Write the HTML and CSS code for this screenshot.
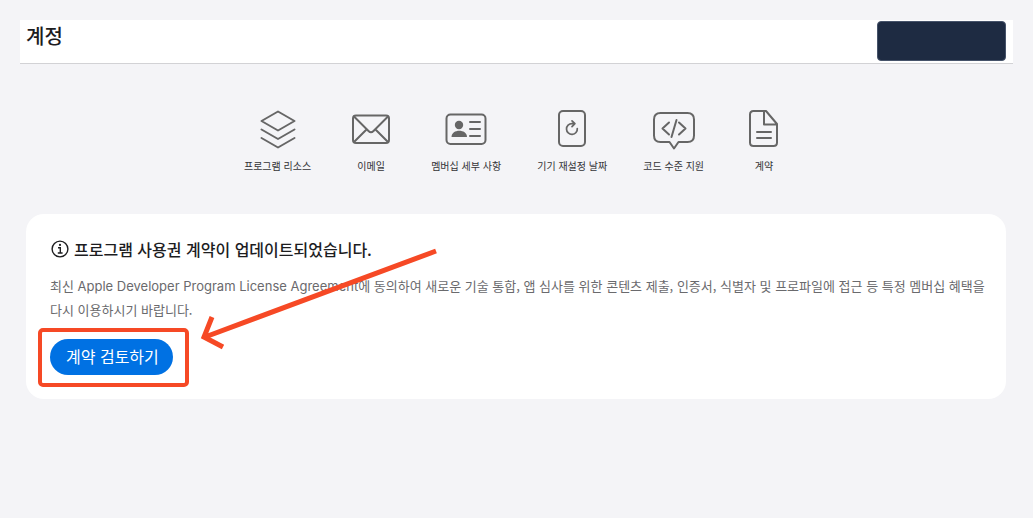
FILE: index.html
```html
<!DOCTYPE html>
<html lang="ko">
<head>
<meta charset="utf-8">
<meta name="viewport" content="width=device-width, initial-scale=1">
<title>계정</title>
<link rel="stylesheet" href="styles.css">
</head>
<body>
<header class="topbar">
  <h1 class="topbar-title">계정</h1>
  <div class="topbar-account"></div>
</header>
<main class="content">
  <nav class="shortcuts">
    <a class="shortcut" href="#resources">
      <svg class="shortcut-icon" viewBox="0 0 48 44"><path d="M24 5.500 40.500 15 24 24.500 7.500 15ZM7.500 23.500 24 33 40.500 23.500M7.500 32 24 41.500 40.500 32"/></svg>
      <span>프로그램 리소스</span>
    </a>
    <a class="shortcut" href="#email">
      <svg class="shortcut-icon" viewBox="0 0 48 44"><rect x="6" y="9.500" width="36" height="27.500" rx="3"/><path d="M7 10.500 21.500 25Q24 27.500 26.500 25L41 10.500M7 36 19.500 23.500M41 36 28.500 23.500"/></svg>
      <span>이메일</span>
    </a>
    <a class="shortcut" href="#membership">
      <svg class="shortcut-icon" viewBox="0 0 48 44"><rect x="4.500" y="8.500" width="39" height="29.500" rx="4"/><path d="M28 16h10M28 23h10M28 30h10"/><circle class="solid" cx="17" cy="19" r="4.200"/><path class="solid" d="M9.500 31C9.500 22.800 25 22.800 25 31Z"/></svg>
      <span>멤버십 세부 사항</span>
    </a>
    <a class="shortcut" href="#devices">
      <svg class="shortcut-icon" viewBox="0 0 48 44"><rect x="11" y="5" width="26" height="35" rx="4"/><path class="fine" d="M29.300 22.500A5.400 5.400 0 1 1 24 17.600H26.500M24 14.800 26.900 17.600 24 20.600"/></svg>
      <span>기기 재설정 날짜</span>
    </a>
    <a class="shortcut" href="#support">
      <svg class="shortcut-icon" viewBox="0 0 48 44"><path d="M10.500 7H37.500Q44 7 44 13.500V29.500Q44 36 37.500 36H28.500L24 42.500 19.500 36H10.500Q4 36 4 29.500V13.500Q4 7 10.500 7Z"/><path d="M19 16.500 12.500 22.500 19 28.500M29 16.500 35.500 22.500 29 28.500M26.500 14 21.500 31"/></svg>
      <span>코드 수준 지원</span>
    </a>
    <a class="shortcut" href="#agreements">
      <svg class="shortcut-icon" viewBox="0 0 48 44"><path d="M13.500 5H26L37 18V36.500Q37 40 33.500 40H13.500Q10 40 10 36.500V8.500Q10 5 13.500 5ZM24 5.500V18.500H36.500M17 26H31M17 32H31"/></svg>
      <span>계약</span>
    </a>
  </nav>
  <section class="notice">
    <h2 class="notice-title">
      <svg class="notice-icon" viewBox="0 0 20 18"><circle cx="10" cy="9" r="7.900"/><path d="M8 7.700H10.300V13M7.800 13H12.600"/><circle class="dot" cx="10" cy="4.900" r="1.100"/></svg>
      프로그램 사용권 계약이 업데이트되었습니다.
    </h2>
    <p class="notice-text">최신 <span class="latin">Apple Developer Program License Agreement</span>에 동의하여 새로운 기술 통합, 앱 심사를 위한 콘텐츠 제출, 인증서, 식별자 및 프로파일에 접근 등 특정 멤버십 혜택을 다시 이용하시기 바랍니다.</p>
    <div class="review">
      <button class="review-button" type="button">계약 검토하기</button>
      <div class="review-frame"></div>
      <svg class="review-arrow" viewBox="0 0 240 104"><path d="M236 3 5 89M12 69 4 89 23 99"/></svg>
    </div>
  </section>
</main>
</body>
</html>
```

FILE: styles.css
```css
* { box-sizing: border-box; }

body {
  margin: 0;
  padding: 20px;
  background: #f4f4f7;
  color: #1d1d1f;
  font-family: "Noto Sans CJK KR", sans-serif;
}

.topbar {
  display: flex;
  justify-content: space-between;
  align-items: flex-start;
  padding: 1px 7px 2px 6px;
  background: #fff;
  border-bottom: 1px solid #d2d2d5;
}

.topbar-title {
  margin: 0;
  font-size: 20px;
  line-height: 30px;
  font-weight: 500;
}

.topbar-account {
  width: 129px;
  height: 40px;
  border: 1px solid #46536a;
  border-radius: 4px;
  background: #1e2b42;
}

.content { padding: 42px 7px 0 6px; }

.shortcuts {
  display: flex;
  flex-wrap: wrap;
  justify-content: center;
  gap: 36px;
  font-family: Inter, "Noto Sans CJK KR", sans-serif;
}

.shortcut {
  display: flex;
  flex-direction: column;
  align-items: center;
  gap: 8px;
  min-width: 48px;
  color: #333336;
  font-size: 10px;
  line-height: 16px;
  text-decoration: none;
}

.shortcut-icon {
  width: 48px;
  height: 44px;
  fill: none;
  stroke: #666;
  stroke-width: 2;
  stroke-linecap: round;
  stroke-linejoin: round;
}

.shortcut-icon .solid { fill: #666; stroke: none; }
.shortcut-icon .fine { stroke-width: 1.7; }

.notice {
  margin-top: 40px;
  padding: 24px 20px 24px 24px;
  border-radius: 18px;
  background: #fff;
}

.notice-title {
  display: flex;
  align-items: center;
  gap: 4px;
  margin: 0;
  font-size: 16px;
  line-height: 22px;
  font-weight: 500;
}

.notice-icon {
  flex: none;
  width: 20px;
  height: 18px;
  fill: none;
  stroke: #1d1d1f;
  stroke-width: 1.4;
}

.notice-icon .dot { fill: #1d1d1f; stroke: none; }

.notice-text {
  margin: 14px 0 17px;
  color: #6a6a6d;
  font-size: 13px;
  line-height: 24px;
  word-break: keep-all;
}

.latin { font-family: Inter, sans-serif; }

.review {
  position: relative;
  width: fit-content;
}

.review-button {
  display: block;
  padding: 0 14px 2px 16px;
  border: 0;
  border-radius: 18px;
  background: #0071e3;
  color: #fff;
  font: inherit;
  font-size: 16px;
  line-height: 34px;
}

.review-frame {
  position: absolute;
  inset: -11px -16px -12px -12px;
  border: 4px solid #f64925;
  border-radius: 5px;
  pointer-events: none;
}

.review-arrow {
  position: absolute;
  left: 150px;
  bottom: 23px;
  width: 240px;
  height: 104px;
  fill: none;
  stroke: #f64925;
  stroke-width: 5;
  pointer-events: none;
}
```
